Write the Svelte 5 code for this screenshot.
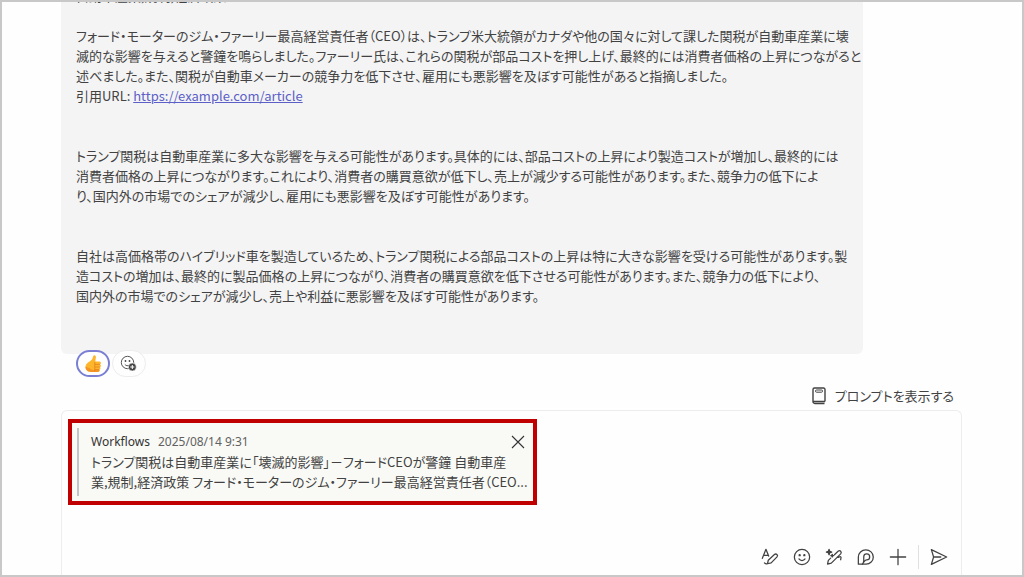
<script>
	const url = 'https://example.com/article';

	const article = [
		'自動車産業,規制,経済政策',
		'',
		'フォード・モーターのジム・ファーリー最高経営責任者（CEO）は、トランプ米大統領がカナダや他の国々に対して課した関税が自動車産業に壊',
		'滅的な影響を与えると警鐘を鳴らしました。ファーリー氏は、これらの関税が部品コストを押し上げ、最終的には消費者価格の上昇につながると',
		'述べました。また、関税が自動車メーカーの競争力を低下させ、雇用にも悪影響を及ぼす可能性があると指摘しました。'
	];

	const analysis = [
		[
			'トランプ関税は自動車産業に多大な影響を与える可能性があります。具体的には、部品コストの上昇により製造コストが増加し、最終的には',
			'消費者価格の上昇につながります。これにより、消費者の購買意欲が低下し、売上が減少する可能性があります。また、競争力の低下によ',
			'り、国内外の市場でのシェアが減少し、雇用にも悪影響を及ぼす可能性があります。'
		],
		[
			'自社は高価格帯のハイブリッド車を製造しているため、トランプ関税による部品コストの上昇は特に大きな影響を受ける可能性があります。製',
			'造コストの増加は、最終的に製品価格の上昇につながり、消費者の購買意欲を低下させる可能性があります。また、競争力の低下により、',
			'国内外の市場でのシェアが減少し、売上や利益に悪影響を及ぼす可能性があります。'
		]
	];

	const quote = [
		'トランプ関税は自動車産業に「壊滅的影響」－フォードCEOが警鐘 自動車産',
		'業,規制,経済政策 フォード・モーターのジム・ファーリー最高経営責任者（CEO...'
	];

	let draft = '';
	let showQuote = true;
</script>

<main class="chat">
	<article class="message">
		<div class="text">
			{#each article as line}
				<p>{line}</p>
			{/each}
			<p>引用URL: <a href={url}>{url}</a></p>
		</div>
		{#each analysis as block}
			<div class="text">
				{#each block as line}
					<p>{line}</p>
				{/each}
			</div>
		{/each}
	</article>

	<div class="reactions">
		<button class="reaction active" aria-label="いいね">
			<svg width="20" height="20" viewBox="0 0 20 20">
				<path d="M10.6 1.4c1.6-.5 2.5.6 2.3 2.2l-.6 4h3.7c2.2 0 2.4 2.3 1.1 2.8 1.2.7 1 2.3-.1 2.6.9.8.5 2.2-.6 2.5.5 1.2-.4 2.5-1.9 2.5H8.3c-3.4 0-5.8-2-5.8-5.200 0-2.700 2-3.900 4-5.300C8.600 6 9.700 5 9.800 3.200z" fill="#fdb52b" />
				<path d="M2.500 12.800c0 3.200 2.400 5.200 5.800 5.200h6.200c1.500 0 2.400-1.300 1.900-2.500-3.300 1.300-7.900.8-10.200-1.500z" fill="#f59324" />
				<path d="M11.800 10.400h5M11.800 13h5M11.800 15.500h4.400M11.800 8v9.300" fill="none" stroke="#df7d19" stroke-width=".7" />
			</svg>
		</button>
		<button class="reaction" aria-label="リアクションを追加">
			<svg width="18" height="18" viewBox="0 0 18 18">
				<circle cx="7.500" cy="7.500" r="6.200" fill="none" stroke="#555" />
				<circle cx="5.500" cy="6" r=".9" fill="#444" />
				<circle cx="9.500" cy="6" r=".9" fill="#444" />
				<path d="M4.800 9.300c1.200 1.600 3 1.800 4.300 1" fill="none" stroke="#555" />
				<circle cx="12.300" cy="12" r="4" fill="#444" stroke="#fff" stroke-width=".6" />
				<path d="M12.300 10v4M10.300 12h4" stroke="#fff" />
			</svg>
		</button>
	</div>

	<button class="prompts">
		<svg width="16" height="18" viewBox="0 0 16 18" fill="none" stroke="#424242">
			<path d="M14 14.500H2.500M14 14.500V2.500a1.500 1.500 0 0 0-1.500-1.500h-9A1.500 1.500 0 0 0 2 2.500v12A1.800 1.800 0 0 0 3.800 16.500H13.500" stroke-width="1.400" />
			<rect x="4.500" y="3" width="7" height="2.200" rx="1" />
		</svg>
		<span>プロンプトを表示する</span>
	</button>

	<section class="composer">
		{#if showQuote}
			<div class="quote">
				<div class="quote-body">
					<header>
						<strong>Workflows</strong>
						<time>2025/08/14 9:31</time>
						<button class="close" aria-label="閉じる" on:click={() => (showQuote = false)}>
							<svg width="14" height="14" viewBox="0 0 14 14"><path d="M1 1l12 12M13 1L1 13" stroke="#333" stroke-width="1.100" /></svg>
						</button>
					</header>
					{#each quote as line}
						<p>{line}</p>
					{/each}
				</div>
			</div>
		{/if}
		<textarea bind:value={draft} aria-label="メッセージを入力"></textarea>
		<div class="toolbar">
			<button aria-label="書式">
				<svg viewBox="0 0 20 20">
					<path d="M1.500 11.500L5.500 1.500 8.500 9M3 8.200h5" />
					<path d="M7.200 17.500l.9-3.900 6.800-6.300c2-1.700 4.500.6 2.900 2.600l-6.500 6.600z M7.200 17.500c-1.600.5-2.700-.2-3.400-1" />
				</svg>
			</button>
			<button aria-label="絵文字">
				<svg viewBox="0 0 20 20">
					<circle cx="10" cy="10" r="8.500" />
					<path d="M6.600 12.200c1.600 2.300 5.200 2.300 6.800 0" />
					<circle cx="7.400" cy="8" r=".6" class="solid" />
					<circle cx="12.600" cy="8" r=".6" class="solid" />
				</svg>
			</button>
			<button aria-label="書き換え">
				<svg viewBox="0 0 20 20">
					<path d="M4.500 1.500l.8 2.200 2.200.8-2.200.8-.8 2.200-.8-2.200-2.200-.8 2.200-.8zM8 7l.4 1.100 1.100.4-1.100.4L8 10l-.4-1.100-1.100-.4 1.100-.4z" class="solid" />
					<path d="M10.500 7.500L14.500 3.700c2.200-1.900 4.600.7 2.900 2.800L7 16.800l-4.200 1.100.9-4.100 2.600-2.500M13.500 10.300c2 .8 3-1.800 4.200-.2.600 1-.7 2-.2 3" />
				</svg>
			</button>
			<button aria-label="Loop">
				<svg viewBox="0 0 20 20">
					<path d="M1.500 18V10A8.300 8 0 1 1 10 18z" />
					<path d="M6 18c1.200-1.200 1.500-2.500 1.500-4V9.800A3.300 3.300 0 1 1 10.800 13.200c-1.800 0-2.800 1.300-4.800 4.800" />
				</svg>
			</button>
			<button aria-label="追加">
				<svg viewBox="0 0 20 20"><path d="M10 1.500v17M1.500 10h17" /></svg>
			</button>
			<span class="divider"></span>
			<button aria-label="送信">
				<svg viewBox="0 0 20 20"><path d="M1.500 1.800L18.500 10 1.500 18.200 4 10zM4 10h8" /></svg>
			</button>
		</div>
	</section>
</main>

<style>
	:global(body) {
		margin: 0;
	}

	.chat {
		box-sizing: border-box;
		height: 100vh;
		overflow: hidden;
		display: flex;
		flex-direction: column;
		justify-content: flex-end;
		padding: 0 60px 0 59px;
		border: 2px solid #c8c8c8;
		background: #fefefe;
		color: #424242;
		font: 13px/20px 'Noto Sans CJK JP', sans-serif;
		font-feature-settings: 'palt';
	}

	.chat > * {
		flex-shrink: 0;
	}

	p {
		margin: 0;
		min-height: 20px;
		white-space: nowrap;
	}

	button {
		display: flex;
		align-items: center;
		justify-content: center;
		padding: 0;
		border: 0;
		background: none;
		color: inherit;
		font: inherit;
		font-feature-settings: inherit;
		cursor: pointer;
	}

	.message {
		display: flex;
		flex-direction: column;
		gap: 40px;
		box-sizing: border-box;
		width: 89%;
		padding: 16px 15px 48px;
		border-radius: 6px;
		background: #f4f4f4;
	}

	a {
		color: #5b5fc7;
		text-decoration: underline;
	}

	.reactions {
		display: flex;
		gap: 2px;
		margin: -4px 0 0 15px;
	}

	.reaction {
		box-sizing: border-box;
		width: 34px;
		height: 27px;
		border: 1px solid #ececec;
		border-radius: 14px;
		background: #fefefe;
	}

	.reaction.active {
		border: 2px solid #7b7fd4;
	}

	.prompts {
		align-self: flex-end;
		gap: 8px;
		height: 24px;
		margin: 7px 8px 2px 0;
	}

	.composer {
		display: flex;
		flex-direction: column;
		height: 165px;
		box-sizing: border-box;
		border: 1px solid #ededed;
		border-bottom: 0;
		border-radius: 6px 6px 0 0;
	}

	.quote {
		box-sizing: border-box;
		max-width: 469px;
		margin: 8px 0 0 6px;
		padding: 5px;
		border: 4px solid #c00000;
		background: #f9faf6;
	}

	.quote-body {
		padding: 2px 2px 4px 12px;
		border-left: 2px solid #c4c4c4;
	}

	.quote header {
		display: flex;
		align-items: center;
		gap: 8px;
		box-sizing: border-box;
		height: 22px;
		padding-top: 2px;
		font-family: 'Noto Sans', sans-serif;
		font-size: 12px;
	}

	strong {
		font-weight: 400;
		color: #333;
	}

	time {
		color: #616161;
	}

	.close {
		width: 16px;
		height: 16px;
		margin-left: auto;
	}

	textarea {
		flex: 1;
		min-height: 0;
		padding: 4px 12px;
		border: 0;
		outline: 0;
		resize: none;
		background: none;
		font: inherit;
	}

	.toolbar {
		display: flex;
		align-items: center;
		justify-content: flex-end;
		height: 36px;
		padding-right: 6px;
	}

	.toolbar button {
		width: 32px;
		height: 32px;
	}

	.toolbar svg {
		width: 18px;
		height: 18px;
		fill: none;
		stroke: #424242;
		stroke-width: 1.4;
		stroke-linecap: round;
		stroke-linejoin: round;
	}

	.toolbar .solid {
		fill: #424242;
	}

	.divider {
		width: 1px;
		height: 24px;
		margin: 0 4px;
		background: #e0e0e0;
	}
</style>
